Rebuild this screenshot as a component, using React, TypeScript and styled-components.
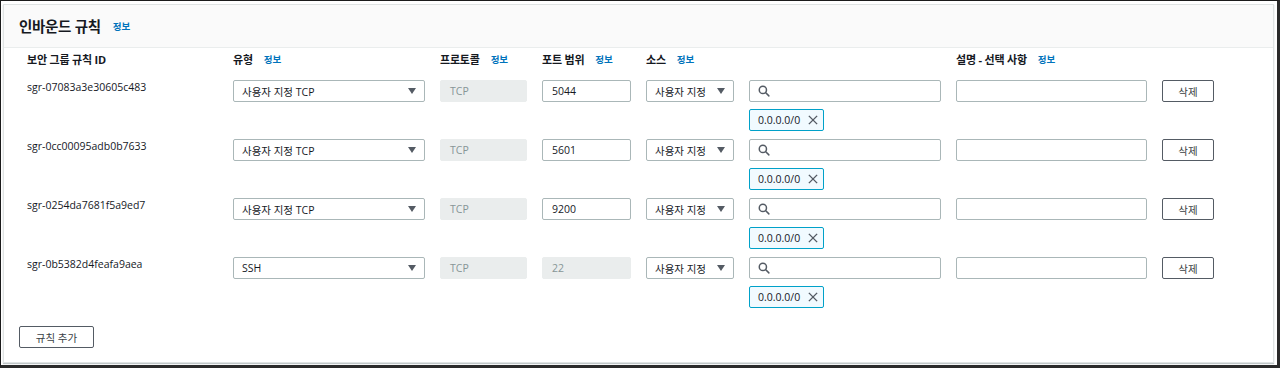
import React from 'react';
import styled, { createGlobalStyle } from 'styled-components';

const GlobalStyle = createGlobalStyle`
  html, body { margin: 0; padding: 0; background: #fff; }
  body {
    font-family: "Open Sans", "Noto Sans CJK KR", sans-serif;
    color: #16191f;
    font-size: 10.5px;
  }
  * { box-sizing: border-box; }
`;

const Frame = styled.div`
  width: 1280px;
  height: 368px;
  border-left: 1px solid #1b1b1b;
  border-top: 1px solid #1b1b1b;
  border-right: 3px solid #2a2a2a;
  border-bottom: 3px solid #2a2a2a;
  padding: 3px 3px 2px 2px;
  background: #fff;
`;

const Panel = styled.section`
  height: 100%;
  border: 1px solid #dfe3e3;
  box-shadow: 0 1px 1px rgba(0, 28, 36, 0.25);
  display: flex;
  flex-direction: column;
`;

const Header = styled.header`
  flex-shrink: 0;
  height: 43px;
  background: #fafafa;
  border-bottom: 1px solid #eaeded;
  display: flex;
  align-items: center;
  padding: 0 15px 1px;
  gap: 12px;
`;

const Title = styled.h2`
  margin: 0;
  font-size: 14.5px;
  font-weight: 700;
  letter-spacing: -0.3px;
`;

const Info = styled.a`
  color: #0073bb;
  font-size: 9.5px;
  font-weight: 700;
  text-decoration: none;
`;

const Body = styled.div`
  padding: 0 15px 13px 23px;
  display: flex;
  flex-direction: column;
`;

const Grid = styled.div`
  display: grid;
  grid-template-columns: 191px 192px 87px 89px 88px 192px 191px 52px;
  column-gap: 15px;
`;

const HeadCell = styled.div`
  height: 32px;
  padding-bottom: 10px;
  display: flex;
  align-items: center;
  gap: 11px;
  font-weight: 700;
  font-size: 11px;
  letter-spacing: -0.2px;
`;

const Cell = styled.div<{ $last?: boolean }>`
  padding-bottom: ${(p) => (p.$last ? '0' : '8px')};
  display: flex;
  flex-direction: column;
  gap: 7px;
`;

const IdText = styled.div`
  padding-top: 0;
  font-size: 10.5px;
`;

const boxBase = `
  height: 22px;
  border-radius: 2px;
  display: flex;
  align-items: center;
  font-size: 10.5px;
`;

const Input = styled.div<{ $disabled?: boolean }>`
  ${boxBase}
  padding: 0 9px;
  border: 1px solid ${(p) => (p.$disabled ? '#eaeded' : '#aab7b8')};
  background: ${(p) => (p.$disabled ? '#eaeded' : '#fff')};
  color: ${(p) => (p.$disabled ? '#879596' : '#16191f')};
`;

const Select = styled.div`
  ${boxBase}
  padding: 0 8px;
  border: 1px solid #aab7b8;
  background: #fff;
  justify-content: space-between;
`;

const Caret = styled.span`
  width: 0;
  height: 0;
  border-left: 4.5px solid transparent;
  border-right: 4.5px solid transparent;
  border-top: 6px solid #545b64;
  margin-left: 6px;
`;

const SearchBox = styled.div`
  ${boxBase}
  padding: 0 8px;
  border: 1px solid #aab7b8;
  background: #fff;
`;

const Chip = styled.div`
  ${boxBase}
  align-self: flex-start;
  width: 75px;
  padding: 0 4px 0 8px;
  border: 1px solid #00a1c9;
  background: #f1faff;
  justify-content: space-between;
`;

const Button = styled.button<{ $wide?: boolean }>`
  height: 22px;
  width: ${(p) => (p.$wide ? '75px' : '52px')};
  border: 1px solid #545b64;
  border-radius: 2px;
  background: #fff;
  font-family: inherit;
  font-size: 10.5px;
  color: #3a3f45;
  font-weight: 400;
  padding: 0;
`;

const Footer = styled.div`
  margin-top: 18px;
  margin-left: -8px;
`;

const SearchIcon = () => (
  <svg width="12" height="12" viewBox="0 0 16 16" fill="none" stroke="#545b64" strokeWidth="2">
    <circle cx="6.5" cy="6.5" r="4.8" />
    <line x1="10" y1="10" x2="14.5" y2="14.5" strokeLinecap="round" />
  </svg>
);

const CloseIcon = () => (
  <svg width="12" height="12" viewBox="0 0 16 16" fill="none" stroke="#545b64" strokeWidth="1.8">
    <line x1="2.5" y1="2.5" x2="13.5" y2="13.5" />
    <line x1="13.5" y1="2.5" x2="2.5" y2="13.5" />
  </svg>
);

const rules = [
  { id: 'sgr-07083a3e30605c483', type: '사용자 지정 TCP', port: '5044', portDisabled: false },
  { id: 'sgr-0cc00095adb0b7633', type: '사용자 지정 TCP', port: '5601', portDisabled: false },
  { id: 'sgr-0254da7681f5a9ed7', type: '사용자 지정 TCP', port: '9200', portDisabled: false },
  { id: 'sgr-0b5382d4feafa9aea', type: 'SSH', port: '22', portDisabled: true },
];

export default function App() {
  return (
    <>
      <GlobalStyle />
      <Frame>
        <Panel>
          <Header>
            <Title>인바운드 규칙</Title>
            <Info>정보</Info>
          </Header>
          <Body>
            <Grid>
              <HeadCell>보안 그룹 규칙 ID</HeadCell>
              <HeadCell>유형 <Info>정보</Info></HeadCell>
              <HeadCell>프로토콜 <Info>정보</Info></HeadCell>
              <HeadCell>포트 범위 <Info>정보</Info></HeadCell>
              <HeadCell>소스 <Info>정보</Info></HeadCell>
              <HeadCell />
              <HeadCell>설명 - 선택 사항 <Info>정보</Info></HeadCell>
              <HeadCell />
              {rules.map((r, i) => {
                const last = i === rules.length - 1;
                return (
                  <React.Fragment key={r.id}>
                    <Cell $last={last}><IdText>{r.id}</IdText></Cell>
                    <Cell $last={last}>
                      <Select>{r.type}<Caret /></Select>
                    </Cell>
                    <Cell $last={last}><Input $disabled>TCP</Input></Cell>
                    <Cell $last={last}><Input $disabled={r.portDisabled}>{r.port}</Input></Cell>
                    <Cell $last={last}>
                      <Select>사용자 지정<Caret /></Select>
                    </Cell>
                    <Cell $last={last}>
                      <SearchBox><SearchIcon /></SearchBox>
                      <Chip>0.0.0.0/0<CloseIcon /></Chip>
                    </Cell>
                    <Cell $last={last}><Input /></Cell>
                    <Cell $last={last}><Button>삭제</Button></Cell>
                  </React.Fragment>
                );
              })}
            </Grid>
            <Footer>
              <Button $wide>규칙 추가</Button>
            </Footer>
          </Body>
        </Panel>
      </Frame>
    </>
  );
}
